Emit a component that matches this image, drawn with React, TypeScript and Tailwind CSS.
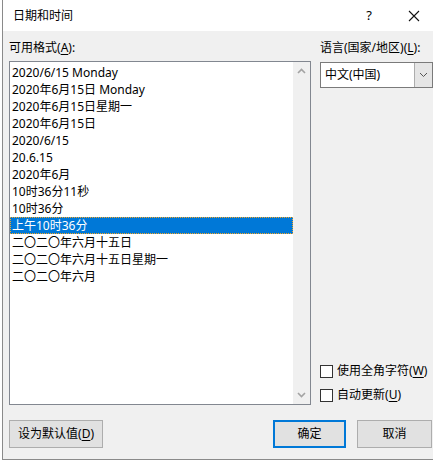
import React from 'react';

const FORMATS = [
  '2020/6/15 Monday',
  '2020年6月15日 Monday',
  '2020年6月15日星期一',
  '2020年6月15日',
  '2020/6/15',
  '20.6.15',
  '2020年6月',
  '10时36分11秒',
  '10时36分',
  '上午10时36分',
  '二〇二〇年六月十五日',
  '二〇二〇年六月十五日星期一',
  '二〇二〇年六月',
];

const SELECTED = 9;

const Key = ({ k }: { k: string }) => (
  <>
    (<span className="underline underline-offset-2">{k}</span>)
  </>
);

const Checkbox = ({ label, k }: { label: string; k: string }) => (
  <div className="flex h-[20px] items-center">
    <div className="h-[13px] w-[13px] border border-[#333333] bg-white" />
    <span className="ml-[4px] leading-[16px]">
      {label}
      <Key k={k} />
    </span>
  </div>
);

const Chevron = ({ up }: { up?: boolean }) => (
  <svg width="9" height="6" viewBox="0 0 9 6" className="block">
    <path
      d={up ? 'M1 5 L4.5 1.5 L8 5' : 'M1 1 L4.5 4.5 L8 1'}
      fill="none"
      stroke="#a3a3a3"
      strokeWidth="1.6"
    />
  </svg>
);

export default function App() {
  return (
    <div
      className="h-[463px] w-[433px] overflow-hidden bg-white text-[12px] text-black"
      style={{ fontFamily: '"Noto Sans", "Noto Sans CJK SC", sans-serif' }}
    >
      <div className="ml-[2px] flex h-[460px] w-[431px] flex-col border-b border-l border-[#8a8a8a]">
        {/* Title bar */}
        <div className="flex h-[31px] shrink-0 items-center bg-white">
          <span className="ml-[10px] text-[12px]">日期和时间</span>
          <span className="ml-auto mr-[36px] text-[13px]">?</span>
          <svg width="12" height="12" viewBox="0 0 12 12" className="mr-[13px]">
            <path d="M1 1 L11 11 M11 1 L1 11" stroke="#111" strokeWidth="1.1" />
          </svg>
        </div>

        {/* Body */}
        <div className="flex flex-1 flex-col bg-[#f0f0f0] pl-[6px] pt-[9px]">
          <div className="flex">
            {/* Left column */}
            <div className="flex w-[302px] flex-col">
              <div className="h-[16px] leading-[16px]">
                可用格式<Key k="A" />:
              </div>
              <div className="mt-[5px] flex h-[344px] border border-[#828790] bg-white">
                <div className="flex-1 pt-[2px]">
                  {FORMATS.map((f, i) =>
                    i === SELECTED ? (
                      <div
                        key={f}
                        className="h-[17px] border border-dotted border-[#f5a623] bg-[#0078d7] pl-[1px] leading-[15px] text-white"
                      >
                        {f}
                      </div>
                    ) : (
                      <div key={f} className="h-[17px] pl-[2px] leading-[17px]">
                        {f}
                      </div>
                    )
                  )}
                </div>
                <div className="flex w-[17px] flex-col items-center justify-between bg-[#f0f0f0] py-[6px]">
                  <Chevron up />
                  <Chevron />
                </div>
              </div>
            </div>

            {/* Right column */}
            <div className="ml-[9px] flex w-[113px] flex-col">
              <div className="h-[16px] whitespace-nowrap leading-[16px]">
                语言(国家/地区)<Key k="L" />:
              </div>
              <div className="mt-[6px] flex h-[26px] border border-[#7a7a7a] bg-white">
                <div className="flex flex-1 items-center pl-[4px]">中文(中国)</div>
                <div className="flex w-[18px] items-center justify-center border-l border-[#adadad] bg-[#e5e5e5]">
                  <svg width="9" height="6" viewBox="0 0 9 6">
                    <path d="M1 1 L4.5 4.5 L8 1" fill="none" stroke="#555" strokeWidth="1" />
                  </svg>
                </div>
              </div>
              <div className="mt-auto flex flex-col gap-[4px]">
                <Checkbox label="使用全角字符" k="W" />
                <Checkbox label="自动更新" k="U" />
              </div>
            </div>
          </div>

          {/* Buttons */}
          <div className="mt-[15px] flex h-[28px]">
            <button className="w-[94px] border border-[#adadad] bg-[#e1e1e1]">
              设为默认值<Key k="D" />
            </button>
            <button className="ml-[170px] w-[73px] border-2 border-[#0078d7] bg-[#e1e1e1]">
              确定
            </button>
            <button className="ml-[11px] w-[75px] border border-[#adadad] bg-[#e1e1e1]">
              取消
            </button>
          </div>
        </div>
      </div>
    </div>
  );
}
